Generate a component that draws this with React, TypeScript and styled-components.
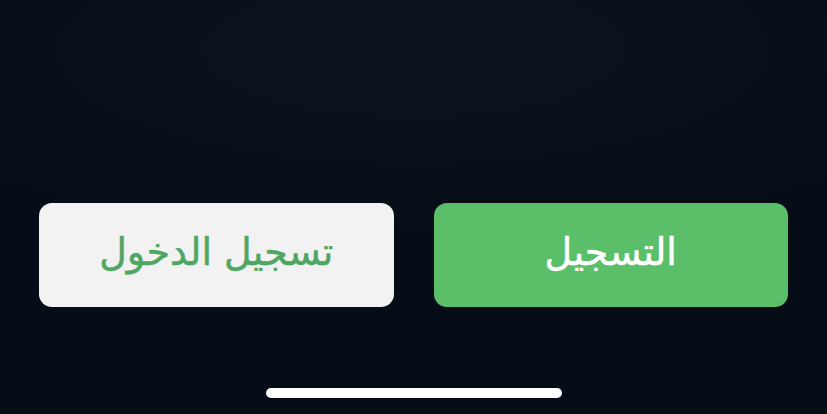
import React from "react";
import styled, { createGlobalStyle } from "styled-components";

const GlobalStyle = createGlobalStyle`
  html, body {
    margin: 0;
    padding: 0;
    background: #070d17;
  }
  * {
    box-sizing: border-box;
  }
`;

const Screen = styled.div`
  width: 100%;
  height: 100vh;
  display: flex;
  flex-direction: column;
  justify-content: flex-end;
  align-items: center;
  background: radial-gradient(
      ellipse 70% 45% at 50% 12%,
      #0b141e 0%,
      rgba(10, 18, 28, 0) 100%
    ),
    #070d17;
  overflow: hidden;
`;

const ButtonRow = styled.div`
  width: 100%;
  display: flex;
  gap: 40px;
  padding: 0 39px;
`;

const ActionButton = styled.button<{ $primary?: boolean }>`
  flex: 1;
  height: 104px;
  border: none;
  border-radius: 13px;
  display: flex;
  align-items: center;
  justify-content: center;
  padding: 0 0 6px;
  font-family: "DejaVu Sans", "Noto Sans", sans-serif;
  font-size: 38px;
  font-weight: 400;
  -webkit-text-stroke: 0.5px currentColor;
  background: ${(p) => (p.$primary ? "#5bbf6a" : "#f2f2f3")};
  color: ${(p) => (p.$primary ? "#ffffff" : "#4ea662")};
  cursor: pointer;
`;

const HomeIndicator = styled.div`
  width: 296px;
  height: 10px;
  border-radius: 5px;
  background: #ffffff;
  margin-top: 81px;
  margin-bottom: 16px;
`;

export default function App() {
  return (
    <>
      <GlobalStyle />
      <Screen>
        <ButtonRow dir="rtl">
          <ActionButton $primary>التسجيل</ActionButton>
          <ActionButton>تسجيل الدخول</ActionButton>
        </ButtonRow>
        <HomeIndicator />
      </Screen>
    </>
  );
}
